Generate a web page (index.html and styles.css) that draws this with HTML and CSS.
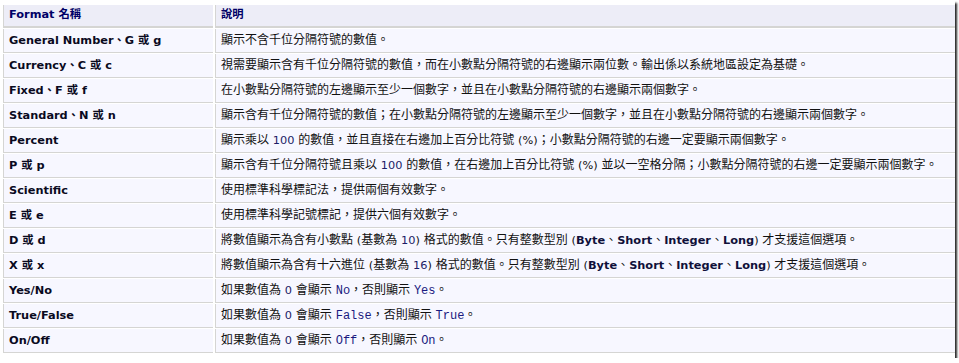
FILE: index.html
```html
<!DOCTYPE html>
<html lang="zh-Hant">
<head>
<meta charset="utf-8">
<title>Format</title>
<link rel="stylesheet" href="styles.css">
</head>
<body>
<div class="shot">
<table class="fmt">
<thead>
<tr><th class="c1">Format 名稱</th><th class="c2">說明</th></tr>
</thead>
<tbody>
<tr><td class="name">General Number、G 或 g</td><td class="desc">顯示不含千位分隔符號的數值。</td></tr>
<tr><td class="name">Currency、C 或 c</td><td class="desc">視需要顯示含有千位分隔符號的數值，而在小數點分隔符號的右邊顯示兩位數。輸出係以系統地區設定為基礎。</td></tr>
<tr><td class="name">Fixed、F 或 f</td><td class="desc">在小數點分隔符號的左邊顯示至少一個數字，並且在小數點分隔符號的右邊顯示兩個數字。</td></tr>
<tr><td class="name">Standard、N 或 n</td><td class="desc">顯示含有千位分隔符號的數值；在小數點分隔符號的左邊顯示至少一個數字，並且在小數點分隔符號的右邊顯示兩個數字。</td></tr>
<tr><td class="name">Percent</td><td class="desc">顯示乘以 <span class="lat num">100</span> 的數值，並且直接在右邊加上百分比符號 <span class="lat">(%)</span>；小數點分隔符號的右邊一定要顯示兩個數字。</td></tr>
<tr><td class="name">P 或 p</td><td class="desc">顯示含有千位分隔符號且乘以 <span class="lat num">100</span> 的數值，在右邊加上百分比符號 <span class="lat">(%)</span> 並以一空格分隔；小數點分隔符號的右邊一定要顯示兩個數字。</td></tr>
<tr><td class="name">Scientific</td><td class="desc">使用標準科學標記法，提供兩個有效數字。</td></tr>
<tr><td class="name">E 或 e</td><td class="desc">使用標準科學記號標記，提供六個有效數字。</td></tr>
<tr><td class="name">D 或 d</td><td class="desc">將數值顯示為含有小數點 <span class="lat">(</span>基數為 <span class="lat num">10</span><span class="lat">)</span> 格式的數值。只有整數型別 <span class="lat">(<b>Byte</b></span>、<b class="lat">Short</b>、<b class="lat">Integer</b>、<span class="lat"><b>Long</b>)</span> 才支援這個選項。</td></tr>
<tr><td class="name">X 或 x</td><td class="desc">將數值顯示為含有十六進位 <span class="lat">(</span>基數為 <span class="lat num">16</span><span class="lat">)</span> 格式的數值。只有整數型別 <span class="lat">(<b>Byte</b></span>、<b class="lat">Short</b>、<b class="lat">Integer</b>、<span class="lat"><b>Long</b>)</span> 才支援這個選項。</td></tr>
<tr><td class="name">Yes/No</td><td class="desc">如果數值為 <span class="lat num">0</span> 會顯示 <code>No</code>，否則顯示 <code>Yes</code>。</td></tr>
<tr><td class="name">True/False</td><td class="desc">如果數值為 <span class="lat num">0</span> 會顯示 <code>False</code>，否則顯示 <code>True</code>。</td></tr>
<tr><td class="name">On/Off</td><td class="desc">如果數值為 <span class="lat num">0</span> 會顯示 <code>Off</code>，否則顯示 <code>On</code>。</td></tr>
</tbody>
</table>
</div>
</body>
</html>
```

FILE: styles.css
```css
html, body {
  margin: 0;
  padding: 0;
  background: #ffffff;
}

.shot {
  width: 955px;
  height: 358px;
  background: #ffffff;
  box-shadow: 2px 3px 2px rgba(0, 0, 0, 0.85);
  overflow: hidden;
  padding-top: 4px;
  box-sizing: border-box;
}

.fmt {
  border-collapse: separate;
  border-spacing: 2px 1px;
  table-layout: fixed;
  width: 956px;
  margin-left: 1px;
  font-family: "DejaVu Sans", "Noto Sans CJK TC", sans-serif;
  color: #111111;
}

.fmt th,
.fmt td {
  box-sizing: border-box;
  text-align: left;
  vertical-align: top;
  white-space: nowrap;
  overflow: hidden;
  border-left: 1px solid #d5d5d3;
  border-bottom: 1px solid #d5d5d3;
}

.fmt th {
  background: #ededf7;
  color: #000066;
  font-weight: bold;
  font-size: 11.33px;
  line-height: 16px;
  height: 23px;
  padding: 1px 5px 0 5px;
  border-bottom-width: 2px;
}

.fmt th.c1 {
  width: 210px;
}

.fmt td {
  background: #f7f7ff;
  height: 24px;
  padding: 3px 5px 0 5px;
  line-height: 16px;
}

.fmt td.name {
  font-weight: bold;
  font-size: 11.33px;
  color: #0a0a1e;
}

.fmt td.desc {
  font-size: 12px;
}

.lat {
  font-size: 11.33px;
}

.num {
  color: #1c1c66;
}

.desc b {
  color: #10103a;
}

code {
  font-family: "Liberation Mono", "DejaVu Sans Mono", monospace;
  font-size: 12px;
  color: #1a1a80;
}
```
